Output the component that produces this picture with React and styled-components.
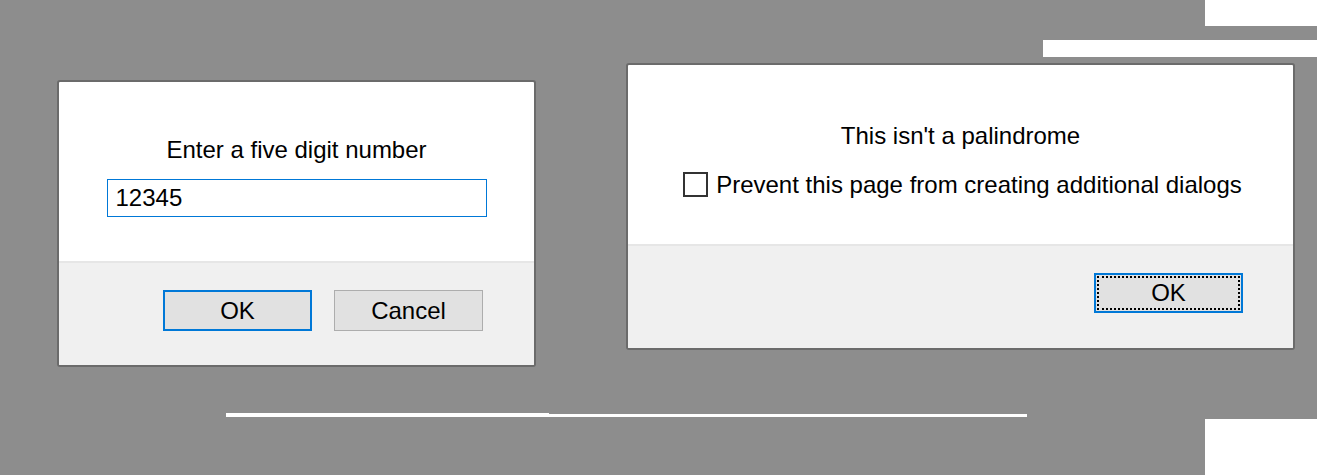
import styled, { createGlobalStyle } from "styled-components";

const Global = createGlobalStyle`
    html, body {
        margin: 0;
        padding: 0;
        background: #8d8d8d;
    }
    body {
        font-family: "Liberation Sans", Arial, sans-serif;
        color: #000;
    }
`;

// leftover bits of the captured desktop, sitting on the grey backdrop
const shards = [
    { top: 0, left: 1205, width: 112, height: 26 },
    { top: 40, left: 1043, width: 274, height: 17 },
    { top: 413, left: 226, width: 323, height: 4 },
    { top: 414, left: 549, width: 478, height: 3 },
    { top: 419, left: 1205, width: 112, height: 56 },
];

export default function App() {
    return (
        <>
            <Global />
            <Stage>
                {shards.map((s, i) => (
                    <Shard key={i} $top={s.top} $left={s.left} $w={s.width} $h={s.height} />
                ))}

                <Dialog $width={479} $offset={17}>
                    <Body $pad={54} $gap={16}>
                        <Message>Enter a five digit number</Message>
                        <Input defaultValue="12345" />
                    </Body>
                    <Footer $right={51}>
                        <Button $primary>OK</Button>
                        <Button>Cancel</Button>
                    </Footer>
                </Dialog>

                <Dialog $width={669} $offset={0}>
                    <Body $pad={57} $gap={22}>
                        <Message>This isn't a palindrome</Message>
                        <CheckRow>
                            <Box />
                            <span>Prevent this page from creating additional dialogs</span>
                        </CheckRow>
                    </Body>
                    <Footer $right={50}>
                        <Button $primary $focused>OK</Button>
                    </Footer>
                </Dialog>
            </Stage>
        </>
    );
}

const Stage = styled.div`
    position: relative;
    height: 475px;
    overflow: hidden;
    display: flex;
    align-items: flex-start;
    gap: 90px;
    padding: 63px 0 0 57px;
    box-sizing: border-box;
`;

const Shard = styled.div`
    position: absolute;
    top: ${p => p.$top}px;
    left: ${p => p.$left}px;
    width: ${p => p.$w}px;
    height: ${p => p.$h}px;
    background: #fff;
`;

const Dialog = styled.div`
    width: ${p => p.$width}px;
    height: 287px;
    margin-top: ${p => p.$offset}px;
    box-sizing: border-box;
    border: 2px solid #6b6b6b;
    border-radius: 3px;
    background: #fff;
    display: flex;
    flex-direction: column;
    overflow: hidden;
`;

const Body = styled.div`
    height: 179px;
    box-sizing: border-box;
    padding-top: ${p => p.$pad}px;
    display: flex;
    flex-direction: column;
    align-items: center;
    gap: ${p => p.$gap}px;
`;

const Message = styled.div`
    font-size: 24px;
    line-height: 27px;
`;

const Input = styled.input`
    width: 380px;
    height: 38px;
    box-sizing: border-box;
    border: 1px solid #0078d7;
    padding: 0 8px;
    font-family: "Liberation Sans", Arial, sans-serif;
    font-size: 24px;
    color: #000;
    outline: none;
    background: #fff;
`;

const CheckRow = styled.label`
    display: flex;
    align-items: center;
    gap: 8px;
    margin-left: 4px;
    font-size: 24px;
    line-height: 27px;
`;

const Box = styled.span`
    width: 25px;
    height: 25px;
    box-sizing: border-box;
    border: 2px solid #333;
    background: #fff;
    flex-shrink: 0;
`;

const Footer = styled.div`
    flex: 1;
    background: #f0f0f0;
    border-top: 2px solid #e6e6e6;
    display: flex;
    justify-content: flex-end;
    align-items: flex-start;
    gap: 22px;
    padding: 27px ${p => p.$right}px 0 0;
`;

const Button = styled.button`
    position: relative;
    width: 149px;
    height: 41px;
    box-sizing: border-box;
    background: #e1e1e1;
    border: ${p => (p.$primary ? "2px solid #0078d7" : "1px solid #adadad")};
    font-family: "Liberation Sans", Arial, sans-serif;
    font-size: 24px;
    color: #000;
    padding: 0;
    ${p => p.$focused && `
        height: 40px;
        &::after {
            content: "";
            position: absolute;
            inset: 1px;
            border: 2px dotted #000;
        }
    `}
`;
